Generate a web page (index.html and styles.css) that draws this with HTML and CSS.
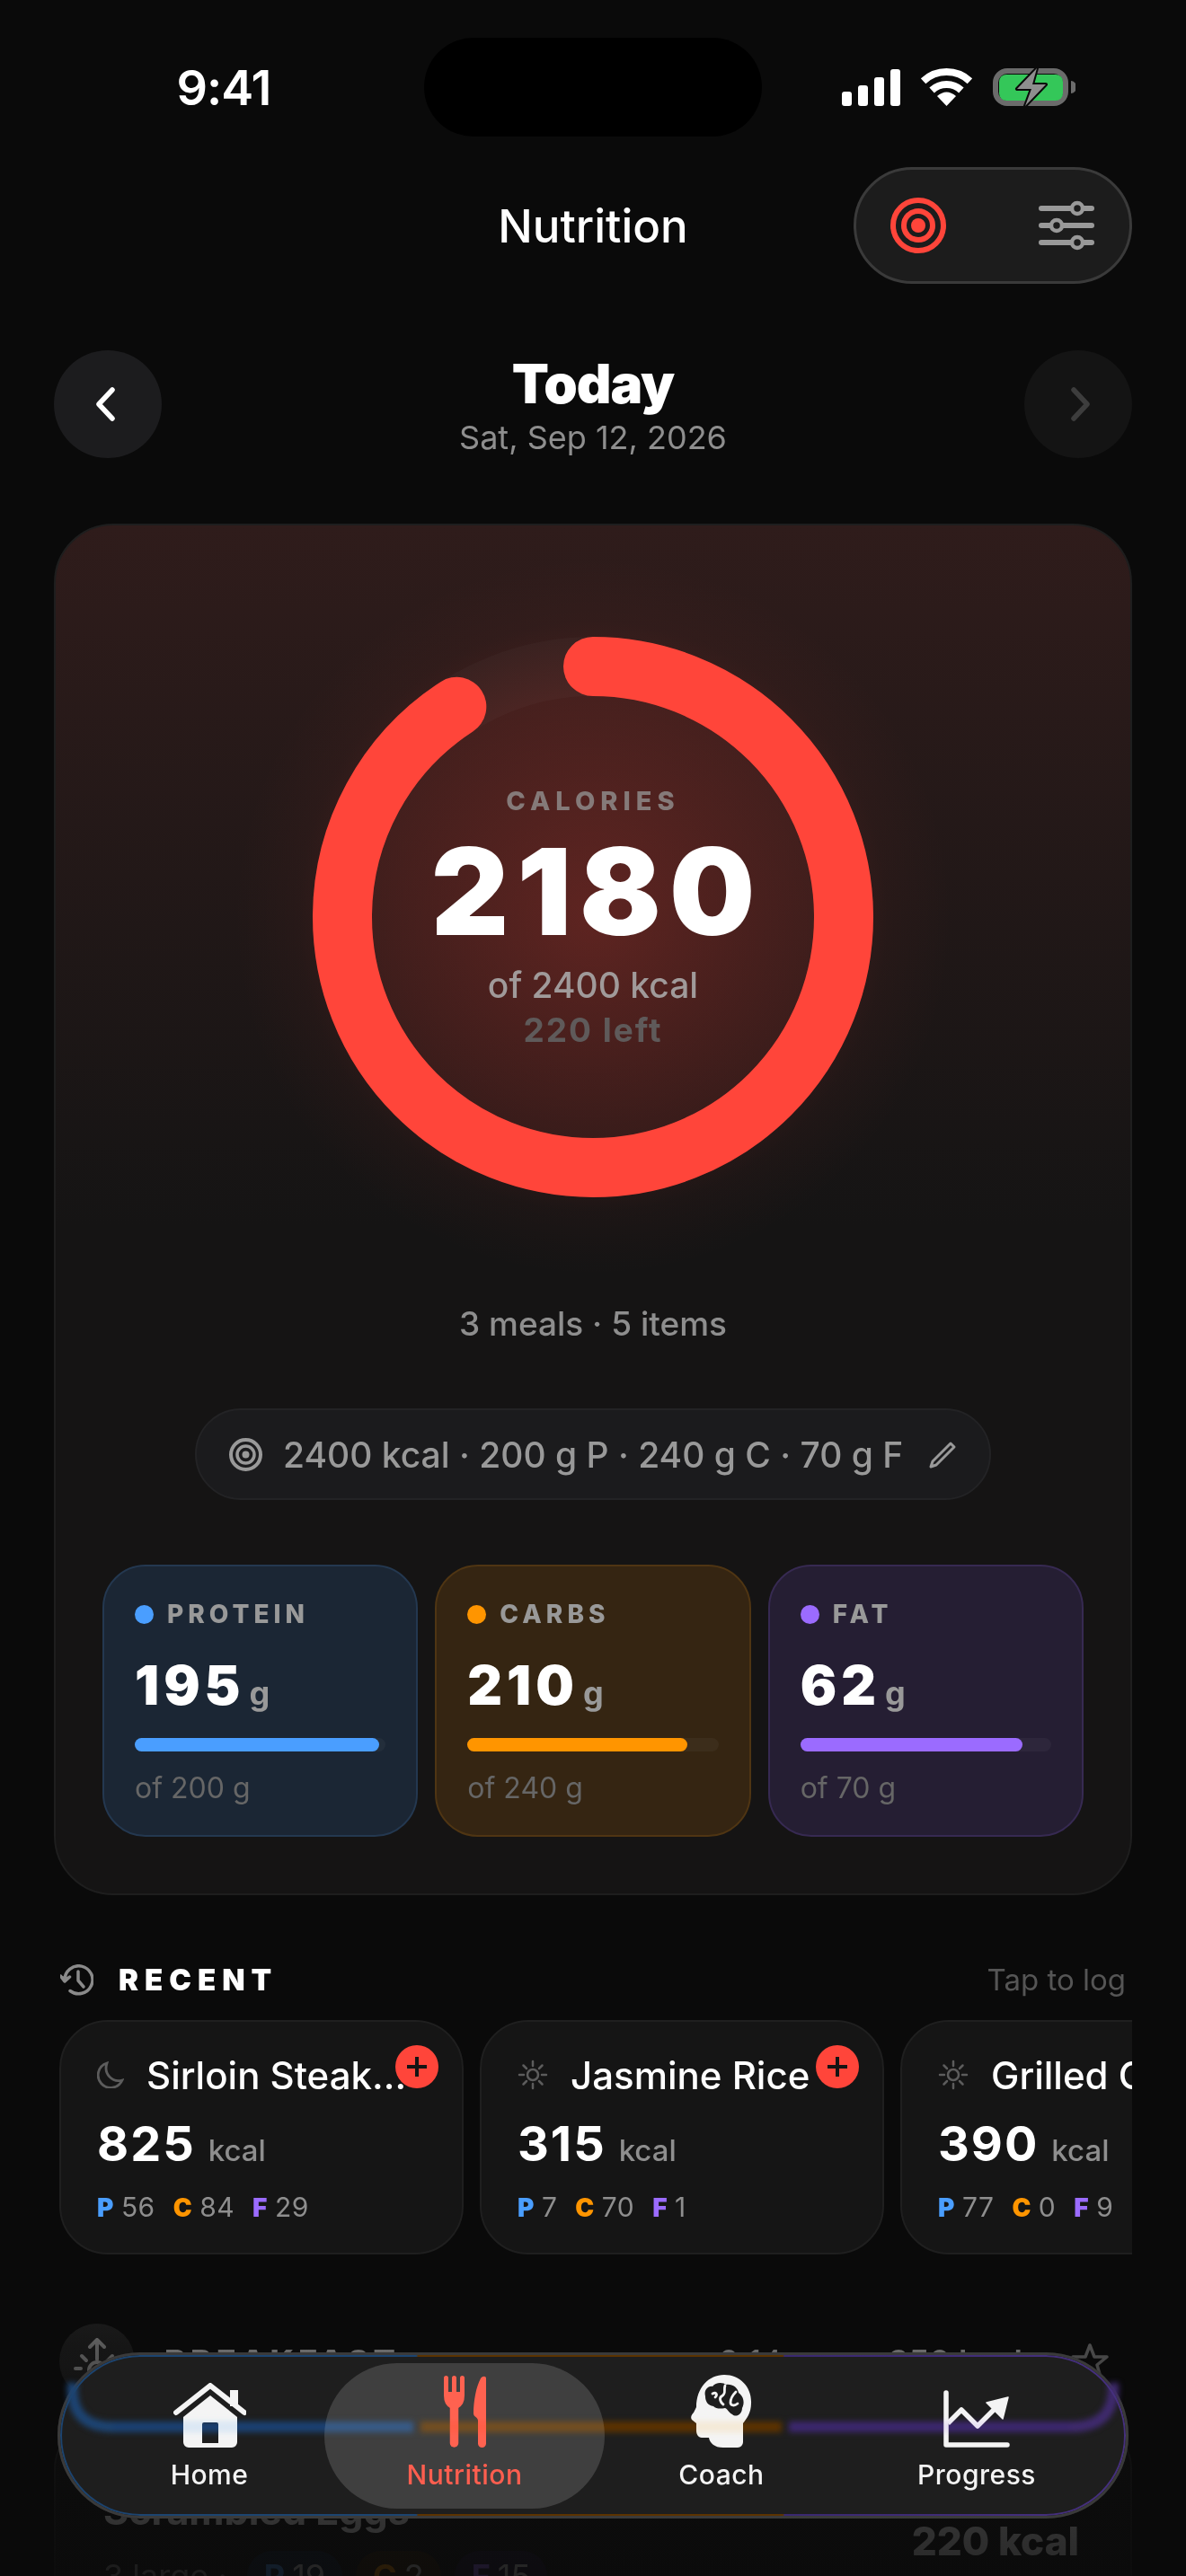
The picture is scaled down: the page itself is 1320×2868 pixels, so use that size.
FILE: index.html
```html
<!DOCTYPE html>
<html>
	<head>
		<meta charset="UTF-8">
		<title>Nutrition</title>
		<link rel="stylesheet" href="styles.css">
	</head>
	<body>
		<div class="phone">
			<div class="status">
				<div class="time">9:41</div>
				<div class="island"></div>
				<div class="status-icons">
					<svg width="65" height="42" viewBox="0 0 65 42"><rect x="0" y="26" width="11" height="16" rx="3" fill="#fff"/><rect x="18" y="19" width="11" height="23" rx="3" fill="#fff"/><rect x="36" y="10" width="11" height="32" rx="3" fill="#fff"/><rect x="54" y="1" width="11" height="41" rx="3" fill="#fff"/></svg>
					<svg width="57" height="42" viewBox="0 0 57 42"><path d="M2.6 14.2A38 38 0 0 1 54.4 14.2M12.1 24.5A24 24 0 0 1 44.9 24.5" fill="none" stroke="#fff" stroke-width="8"/><path d="M28.5 42L18 31Q28.5 22 39 31Z" fill="#fff"/></svg>
					<svg width="92" height="44" viewBox="0 0 92 44"><rect x="3" y="4" width="78" height="36" rx="13" fill="none" stroke="#6b6b6b" stroke-width="6"/><rect x="7" y="8" width="71" height="29" rx="8" fill="#34c759"/><path d="M87 15a6 7 0 0 1 0 14z" fill="#6b6b6b"/><path d="M49 1L27 24H43L36 43L59 19H44Z" fill="#8e8e8e" stroke="#0a0a0a" stroke-width="4" paint-order="stroke" stroke-linejoin="round"/></svg>
				</div>
			</div>

			<div class="topbar">
				<div></div>
				<div class="title">Nutrition</div>
				<div class="top-actions">
					<svg width="62" height="62" viewBox="0 0 62 62" fill="none" stroke="#ff453a"><circle cx="31" cy="31" r="28" stroke-width="6"/><circle cx="31" cy="31" r="16" stroke-width="6"/><circle cx="31" cy="31" r="8" fill="#ff453a" stroke="none"/></svg>
					<svg width="62" height="56" viewBox="0 0 62 56" fill="none" stroke="#999"><path d="M3 9H59M3 28H59M3 47H59" stroke-width="6" stroke-linecap="round"/><circle cx="43" cy="9" r="6" fill="#1c1c1c" stroke-width="4.5"/><circle cx="20" cy="28" r="6" fill="#1c1c1c" stroke-width="4.5"/><circle cx="43" cy="47" r="6" fill="#1c1c1c" stroke-width="4.5"/></svg>
				</div>
			</div>

			<div class="datebar">
				<div class="round-btn">
					<svg class="chev-back" width="24" height="38" viewBox="0 0 24 38" fill="none" stroke="#fff" stroke-width="5.5" stroke-linecap="round" stroke-linejoin="round"><path d="M20 3L5 19L20 35"/></svg>
				</div>
				<div class="date-text">
					<div class="today">Today</div>
					<div class="date">Sat, Sep 12, 2026</div>
				</div>
				<div class="round-btn off">
					<svg class="chev-next" width="24" height="38" viewBox="0 0 24 38" fill="none" stroke="#3d3d3d" stroke-width="5.5" stroke-linecap="round" stroke-linejoin="round"><path d="M4 3L19 19L4 35"/></svg>
				</div>
			</div>

			<div class="card">
				<div class="ring">
					<svg class="ring-svg" width="624" height="624" viewBox="0 0 624 624" fill="none" stroke-width="66">
						<circle cx="312" cy="312" r="279" stroke="#fff" stroke-opacity=".025"/>
						<circle cx="312" cy="312" r="279" stroke="#ff453a" stroke-linecap="round" stroke-dasharray="1592 1753" transform="rotate(-90 312 312)"/>
					</svg>
					<div class="ring-text">
						<div class="ring-label">CALORIES</div>
						<div class="ring-num">2180</div>
						<div class="ring-of">of 2400 kcal</div>
						<div class="ring-left">220 left</div>
					</div>
				</div>

				<div class="meals-count">3 meals · 5 items</div>

				<div class="goal-wrap">
					<div class="goal">
						<svg width="37" height="37" viewBox="0 0 37 37" fill="none" stroke="#999"><circle cx="18.5" cy="18.5" r="16.5" stroke-width="4"/><circle cx="18.5" cy="18.5" r="9.5" stroke-width="3.5"/><circle cx="18.5" cy="18.5" r="4" fill="#999" stroke="none"/></svg>
						<span>2400 kcal · 200 g P · 240 g C · 70 g F</span>
						<svg class="pen" width="31" height="31" viewBox="0 0 31 31" fill="none" stroke="#999" stroke-width="3" stroke-linejoin="round"><path d="M2 29L4 23L24 3L28 7L8 27Z"/></svg>
					</div>
				</div>

				<div class="macros">
					<div class="macro protein">
						<div class="macro-label"><i></i>PROTEIN</div>
						<div class="macro-val">195<span>g</span></div>
						<div class="bar"><div class="bar-fill" style="width: 97.5%"></div></div>
						<div class="macro-of">of 200 g</div>
					</div>
					<div class="macro carbs">
						<div class="macro-label"><i></i>CARBS</div>
						<div class="macro-val">210<span>g</span></div>
						<div class="bar"><div class="bar-fill" style="width: 87.5%"></div></div>
						<div class="macro-of">of 240 g</div>
					</div>
					<div class="macro fat">
						<div class="macro-label"><i></i>FAT</div>
						<div class="macro-val">62<span>g</span></div>
						<div class="bar"><div class="bar-fill" style="width: 88.6%"></div></div>
						<div class="macro-of">of 70 g</div>
					</div>
				</div>
			</div>

			<div class="recent-head">
				<svg width="37" height="35" viewBox="0 0 37 35" fill="none" stroke="#8a8a8a" stroke-width="3.5" stroke-linecap="round" stroke-linejoin="round"><path d="M5 17.5A15.5 15.5 0 1 1 11 29.500"/><path d="M0.500 13L5 19L10.500 14" fill="#8a8a8a"/><path d="M20 8V18L26 25"/></svg>
				<div class="recent-title">RECENT</div>
				<div class="recent-hint">Tap to log</div>
			</div>

			<div class="recent-row">
				<div class="food">
					<div class="plus"><svg width="22" height="22" viewBox="0 0 22 22" stroke="#141414" stroke-width="4"><path d="M11 0V22M0 11H22"/></svg></div>
					<div class="food-name">
						<svg width="30" height="30" viewBox="0 0 30 30" fill="none" stroke="#5c5c5c" stroke-width="2.800"><path d="M11 2A14 14 0 1 0 28 21C17 24 7 14 11 2Z"/></svg>
						<span>Sirloin Steak...</span>
					</div>
					<div class="food-kcal">825<span>kcal</span></div>
					<div class="food-macros"><b class="p">P</b><span>56</span><b class="c">C</b><span>84</span><b class="f">F</b><span>29</span></div>
				</div>
				<div class="food">
					<div class="plus"><svg width="22" height="22" viewBox="0 0 22 22" stroke="#141414" stroke-width="4"><path d="M11 0V22M0 11H22"/></svg></div>
					<div class="food-name">
						<svg width="34" height="34" viewBox="0 0 34 34" fill="none" stroke="#5c5c5c" stroke-width="2.500" stroke-linecap="round"><circle cx="17" cy="17" r="6"/><path d="M17 2V7M17 27V32M2 17H7M27 17H32M6.500 6.500L10 10M24 24L27.500 27.500M27.500 6.500L24 10M10 24L6.500 27.500"/></svg>
						<span>Jasmine Rice</span>
					</div>
					<div class="food-kcal">315<span>kcal</span></div>
					<div class="food-macros"><b class="p">P</b><span>7</span><b class="c">C</b><span>70</span><b class="f">F</b><span>1</span></div>
				</div>
				<div class="food">
					<div class="food-name">
						<svg width="34" height="34" viewBox="0 0 34 34" fill="none" stroke="#5c5c5c" stroke-width="2.500" stroke-linecap="round"><circle cx="17" cy="17" r="6"/><path d="M17 2V7M17 27V32M2 17H7M27 17H32M6.500 6.500L10 10M24 24L27.500 27.500M27.500 6.500L24 10M10 24L6.500 27.500"/></svg>
						<span>Grilled Chicken</span>
					</div>
					<div class="food-kcal">390<span>kcal</span></div>
					<div class="food-macros"><b class="p">P</b><span>77</span><b class="c">C</b><span>0</span><b class="f">F</b><span>9</span></div>
				</div>
			</div>

			<div class="meal-head">
				<div class="meal-icon">
					<svg width="52" height="52" viewBox="0 0 52 52" fill="none" stroke="#a5a5a5" stroke-width="4" stroke-linecap="round" stroke-linejoin="round"><path d="M26 24V3M18 10L26 2L34 10"/><circle cx="26" cy="36" r="9"/><path d="M9 20L14 25M43 20L38 25M2 34H8M44 34H50"/></svg>
				</div>
				<div class="meal-title">BREAKFAST</div>
				<div class="meal-time">8:14</div>
				<div class="meal-total">350 kcal</div>
				<svg width="42" height="42" viewBox="0 0 42 42" fill="none" stroke="#8a8a8a" stroke-width="3.500" stroke-linejoin="round"><path d="M21 3L26 16L40 16L29 25L33 39L21 31L9 39L13 25L2 16L16 16Z"/></svg>
			</div>

			<div class="meal-card">
				<div class="meal-row">
					<div class="meal-name">Scrambled Eggs</div>
					<div class="meal-kcal">220 kcal</div>
				</div>
				<div class="meal-sub">
					<span class="meal-qty">3 large ·</span>
					<span class="chip chip-p"><b>P</b>19</span>
					<span class="chip chip-c"><b>C</b>2</span>
					<span class="chip chip-f"><b>F</b>15</span>
				</div>
			</div>

			<div class="fade"></div>

			<div class="nav">
				<svg class="nav-band" width="1192" height="185" viewBox="0 0 1192 185" fill="none" stroke-width="12">
					<path d="M17 34Q13 83 62 83H396" stroke="#1d4473"/>
					<path d="M404 83H806" stroke="#5c3400"/>
					<path d="M814 83H1128Q1178 83 1175 34" stroke="#3f2a6e"/>
				</svg>
				<div class="nav-rim"></div>
				<div class="tab">
					<svg width="81" height="72" viewBox="0 0 81 72"><path d="M3 33L41 3L79 33" fill="none" stroke="#f4f4f4" stroke-width="6" stroke-linecap="round" stroke-linejoin="round"/><rect x="63" y="8" width="9" height="18" fill="#f4f4f4"/><path fill-rule="evenodd" d="M41 14L71 38V66a6 6 0 0 1-6 6H17a6 6 0 0 1-6-6V38ZM34 44a2 2 0 0 0-2 2V67H50V46a2 2 0 0 0-2-2Z" fill="#f4f4f4"/></svg>
					<span>Home</span>
				</div>
				<div class="tab active">
					<svg width="47" height="80" viewBox="0 0 47 80" fill="#ff6250"><path d="M2.500 2.500V20M11.500 2.500V20M20.500 2.500V20" fill="none" stroke="#ff6250" stroke-width="5" stroke-linecap="round"/><path d="M0 18H23V22Q23 32 16 36H7Q0 32 0 22Z"/><path d="M11.500 32V75" fill="none" stroke="#ff6250" stroke-width="9.500" stroke-linecap="round"/><path d="M47 3C47 0 43 0 41 3C36 12 33 28 33 42C33 46 38 46 38 50V75.500a4.500 4.500 0 0 0 9 0Z"/></svg>
					<span>Nutrition</span>
				</div>
				<div class="tab">
					<svg width="68" height="81" viewBox="0 0 68 81"><path d="M37 0C55 0 68 14 67 32C67 42 62 49 58 54V75a6 6 0 0 1-6 6H36C26 81 21 76 20 70H12C8 70 6 66 6 62V54L1 50C-1 47 1 44 3 42L6 36C6 14 20 0 37 0Z" fill="#f4f4f4"/><path d="M16 24C14 16 20 12 24 13C27 8 36 8 39 11C46 10 52 14 53 20C59 24 60 32 57 37C57 44 50 48 46 44C42 42 41 38 38 37C33 38 28 38 25 35C19 34 16 30 16 24Z" fill="#1e1e1e"/><path d="M24 21C28 19 30 22 27 25M38 12C36 17 40 20 34 24C31 26 33 31 36 33M50 19C46 23 44 26 44 31C44 33 47 36 52 32" fill="none" stroke="#f4f4f4" stroke-width="2.800" stroke-linecap="round"/></svg>
					<span>Coach</span>
				</div>
				<div class="tab">
					<svg width="74" height="64" viewBox="0 0 74 64"><path d="M3 3V61H71" fill="none" stroke="#f4f4f4" stroke-width="5.500" stroke-linecap="round" stroke-linejoin="round"/><path d="M5 37L20 22L38 40L58 20" fill="none" stroke="#f4f4f4" stroke-width="5.500" stroke-linejoin="round"/><path d="M72 8L48 14L66 32Z" fill="#f4f4f4" stroke="#f4f4f4" stroke-width="1.500" stroke-linejoin="round"/></svg>
					<span>Progress</span>
				</div>
				<svg class="nav-band tint" width="1192" height="185" viewBox="0 0 1192 185" fill="none" stroke-width="12">
					<path d="M62 83H396" stroke="#3ea0ff"/>
					<path d="M404 83H806" stroke="#ffb020"/>
					<path d="M814 83H1128" stroke="#a070ff"/>
				</svg>
			</div>
		</div>
	</body>
</html>
```

FILE: styles.css
```css
* {
	box-sizing: border-box;
}
html,body {
	margin: 0;
	padding: 0;
	background-color: #0a0a0a;
}
.phone {
	position: relative;
	width: 1320px;
	height: 2868px;
	overflow: hidden;
	color: #fff;
	font-family: Inter, "Liberation Sans", sans-serif;
}

/* status bar */
.status {
	display: grid;
	grid-template-columns: 1fr 376px 1fr;
	align-items: center;
	height: 110px;
	margin-top: 42px;
}
.time {
	text-align: center;
	padding-left: 26px;
	font-size: 54px;
	font-weight: 600;
	letter-spacing: -1px;
}
.island {
	height: 110px;
	border-radius: 55px;
	background-color: #000;
}
.status-icons {
	display: flex;
	align-items: center;
	gap: 23px;
	padding-left: 89px;
}

/* title */
.topbar {
	display: grid;
	grid-template-columns: 1fr auto 1fr;
	align-items: center;
	height: 130px;
	margin-top: 34px;
	padding: 0 60px;
}
.title {
	font-size: 51px;
	font-weight: 500;
}
.top-actions {
	justify-self: end;
	display: flex;
	align-items: center;
	justify-content: space-between;
	width: 310px;
	height: 130px;
	padding: 0 39px 0 38px;
	border: 3px solid #3a3a3a;
	border-radius: 65px;
	background-color: #1c1c1c;
}

/* date */
.datebar {
	display: flex;
	align-items: center;
	justify-content: space-between;
	height: 120px;
	margin-top: 74px;
	padding: 0 60px;
}
.round-btn {
	display: flex;
	align-items: center;
	justify-content: center;
	width: 120px;
	height: 120px;
	border-radius: 50%;
	background-color: #1c1c1e;
}
.round-btn.off {
	background-color: #141414;
}
.chev-back {
	margin-right: 6px;
}
.chev-next {
	margin-left: 6px;
}
.date-text {
	text-align: center;
}
.today {
	font-size: 60px;
	font-weight: 900;
	line-height: 72px;
	letter-spacing: -1px;
}
.date {
	margin-top: 2px;
	font-size: 36px;
	line-height: 44px;
	color: #8e8e8e;
}

/* main card */
.card {
	height: 1527px;
	margin: 73px 60px 0;
	border: 2px solid #1e1e1e;
	border-radius: 66px;
	background:
		radial-gradient(circle 400px at 598px 436px, rgba(255,69,58,.28), rgba(255,69,58,.14) 62%, rgba(255,69,58,.03) 82%, rgba(255,69,58,0) 100%),
		linear-gradient(180deg, #2f1c1b 0, #151414 780px);
}
.ring {
	display: grid;
	place-items: center;
	width: 624px;
	height: 624px;
	margin: 124px auto 0;
}
.ring-svg,.ring-text {
	grid-area: 1 / 1;
}
.ring-text {
	text-align: center;
}
.ring-label {
	font-size: 29px;
	font-weight: 800;
	line-height: 42px;
	letter-spacing: 6px;
	color: #857a79;
}
.ring-num {
	margin-top: 12px;
	padding-left: 9px;
	font-size: 134px;
	font-weight: 900;
	line-height: 134px;
	letter-spacing: 9px;
}
.ring-of {
	margin-top: 14px;
	font-size: 39px;
	font-weight: 500;
	line-height: 48px;
	color: #a09a9a;
}
.ring-left {
	margin-top: 2px;
	font-size: 37px;
	font-weight: 700;
	line-height: 48px;
	letter-spacing: 2px;
	color: #5f5a5a;
}
.meals-count {
	margin-top: 119px;
	text-align: center;
	font-size: 37px;
	font-weight: 500;
	line-height: 44px;
	color: #8e8e8e;
}
.goal-wrap {
	display: flex;
	justify-content: center;
	margin-top: 72px;
}
.goal {
	display: flex;
	align-items: center;
	gap: 23px;
	width: 886px;
	height: 102px;
	padding: 0 36px;
	border: 2px solid #232325;
	border-radius: 51px;
	background-color: #1b1b1d;
	font-size: 39px;
	font-weight: 500;
	color: #999;
	white-space: nowrap;
}
.pen {
	margin-left: auto;
}
.macros {
	display: grid;
	grid-template-columns: repeat(3, 1fr);
	gap: 19px;
	margin-top: 72px;
	padding: 0 52px;
}
.macro {
	height: 303px;
	padding: 31px 34px 0;
	border: 2px solid;
	border-radius: 48px;
}
.macro-label {
	display: flex;
	align-items: center;
	gap: 15px;
	font-size: 28px;
	font-weight: 800;
	line-height: 44px;
	letter-spacing: 5px;
	color: #999;
}
.macro-label i {
	width: 21px;
	height: 21px;
	border-radius: 50%;
}
.macro-val {
	margin-top: 21px;
	font-size: 60px;
	font-weight: 900;
	line-height: 72px;
	letter-spacing: 5px;
}
.macro-val span {
	margin-left: 5px;
	font-size: 36px;
	font-weight: 700;
	letter-spacing: 0;
	color: #999;
}
.bar {
	height: 15px;
	margin-top: 14px;
	border-radius: 8px;
	background-color: rgba(255,255,255,.04);
}
.bar-fill {
	height: 100%;
	border-radius: 8px;
}
.macro-of {
	margin-top: 21px;
	font-size: 32px;
	line-height: 40px;
	color: #666;
}
.protein {
	background-color: #1b2634;
	border-color: #243850;
}
.protein i,.protein .bar-fill {
	background-color: #4a9eff;
}
.carbs {
	background-color: #352512;
	border-color: #4f3513;
}
.carbs i,.carbs .bar-fill {
	background-color: #ff9500;
}
.fat {
	background-color: #251e33;
	border-color: #372a52;
}
.fat i,.fat .bar-fill {
	background-color: #9b6bff;
}

/* recent */
.recent-head {
	display: flex;
	align-items: center;
	height: 40px;
	margin-top: 74px;
	padding: 0 67px;
}
.recent-title {
	margin-left: 28px;
	font-size: 33px;
	font-weight: 900;
	letter-spacing: 7px;
}
.recent-hint {
	margin-left: auto;
	font-size: 33px;
	color: #555;
}
.recent-row {
	display: flex;
	gap: 18px;
	width: 1194px;
	margin: 25px 0 0 66px;
	overflow: hidden;
}
.food {
	position: relative;
	flex: none;
	width: 450px;
	height: 261px;
	padding: 0 40px;
	border: 2px solid #1f1f1f;
	border-radius: 54px;
	background-color: #151515;
}
.plus {
	position: absolute;
	top: 26px;
	right: 26px;
	display: flex;
	align-items: center;
	justify-content: center;
	width: 48px;
	height: 48px;
	border-radius: 50%;
	background-color: #ff453a;
}
.food-name {
	display: flex;
	align-items: center;
	gap: 25px;
	height: 50px;
	margin-top: 34px;
	font-size: 42px;
	font-weight: 500;
	white-space: nowrap;
}
.food-kcal {
	margin-top: 20px;
	font-size: 54px;
	font-weight: 700;
	line-height: 64px;
	letter-spacing: 2px;
}
.food-kcal span {
	margin-left: 14px;
	font-size: 33px;
	font-weight: 500;
	letter-spacing: 0;
	color: #8e8e8e;
}
.food-macros {
	display: flex;
	align-items: baseline;
	margin-top: 13px;
	font-size: 30px;
	line-height: 36px;
	letter-spacing: .5px;
	color: #8e8e8e;
}
.food-macros b {
	margin-right: 8px;
	font-size: 28px;
	font-weight: 900;
}
.food-macros span {
	margin-right: 20px;
}
.p {
	color: #4a9eff;
}
.c {
	color: #ff9500;
}
.f {
	color: #9b6bff;
}

/* meal section, mostly under the nav */
.meal-head {
	display: flex;
	align-items: center;
	height: 84px;
	margin-top: 77px;
	padding: 0 86px 0 66px;
	color: #ccc;
}
.meal-icon {
	display: flex;
	align-items: center;
	justify-content: center;
	width: 84px;
	height: 84px;
	border-radius: 50%;
	background-color: #222;
}
.meal-title {
	margin-left: 33px;
	font-size: 36px;
	font-weight: 800;
	letter-spacing: 5px;
}
.meal-time {
	margin-left: auto;
	font-size: 36px;
}
.meal-total {
	margin: 0 54px 0 118px;
	font-size: 36px;
	font-weight: 600;
}
.meal-card {
	height: 240px;
	margin: 24px 60px 0;
	padding: 72px 57px 0 53px;
	border: 2px solid #242424;
	border-radius: 54px;
	background-color: #141414;
}
.meal-row {
	display: flex;
	align-items: flex-start;
	justify-content: space-between;
}
.meal-name {
	font-size: 43px;
	font-weight: 700;
}
.meal-kcal {
	margin-top: 33px;
	font-size: 44px;
	font-weight: 800;
}
.meal-sub {
	display: flex;
	align-items: center;
	gap: 15px;
	margin-top: -16px;
	font-size: 36px;
	color: #999;
}
.meal-qty {
	margin-right: 7px;
}
.chip {
	padding: 6px 19px;
	border-radius: 30px;
	color: #ddd;
}
.chip b {
	margin-right: 8px;
}
.chip-p {
	background-color: #16263a;
}
.chip-p b {
	color: #4a9eff;
}
.chip-c {
	background-color: #33220c;
}
.chip-c b {
	color: #ff9500;
}
.chip-f {
	background-color: #221a38;
}
.chip-f b {
	color: #9b6bff;
}
.fade {
	position: absolute;
	left: 0;
	right: 0;
	bottom: 0;
	height: 340px;
	background: linear-gradient(180deg, rgba(10,10,10,0) 0, rgba(10,10,10,.5) 25%, rgba(10,10,10,.82) 75%, rgba(10,10,10,.88) 100%);
}

/* bottom nav */
.nav {
	position: absolute;
	left: 64px;
	bottom: 64px;
	display: grid;
	grid-template-columns: 256px 312px 260px 308px;
	align-items: center;
	width: 1192px;
	height: 185px;
	padding: 12px 15px 11px 41px;
	border-radius: 92px;
	background-color: #1e1e1e;
	box-shadow: inset 0 0 0 3px #3a3a3a;
}
.nav-band {
	position: absolute;
	left: 0;
	top: 0;
	filter: blur(3px);
}
.nav-band.tint {
	opacity: .14;
	mix-blend-mode: multiply;
	pointer-events: none;
}
.nav-rim {
	position: absolute;
	inset: 3px;
	padding: 2px;
	border-radius: 89px;
	background: linear-gradient(90deg, #1c4470 0, #1c4470 33.400%, #5c3300 33.600%, #5c3300 67.800%, #3a2870 68%, #46307f 100%);
	-webkit-mask: linear-gradient(#000 0 0) content-box, linear-gradient(#000 0 0);
	-webkit-mask-composite: xor;
	mask-composite: exclude;
}
.tab {
	position: relative;
	display: flex;
	flex-direction: column;
	align-items: center;
	justify-content: flex-end;
	gap: 11px;
	height: 162px;
	padding-bottom: 19px;
	border-radius: 81px;
	font-size: 30px;
	font-weight: 500;
	line-height: 38px;
	letter-spacing: .5px;
	color: #f4f4f4;
}
.tab.active {
	background-color: rgba(255,255,255,.15);
	color: #ff5e4f;
}
```
